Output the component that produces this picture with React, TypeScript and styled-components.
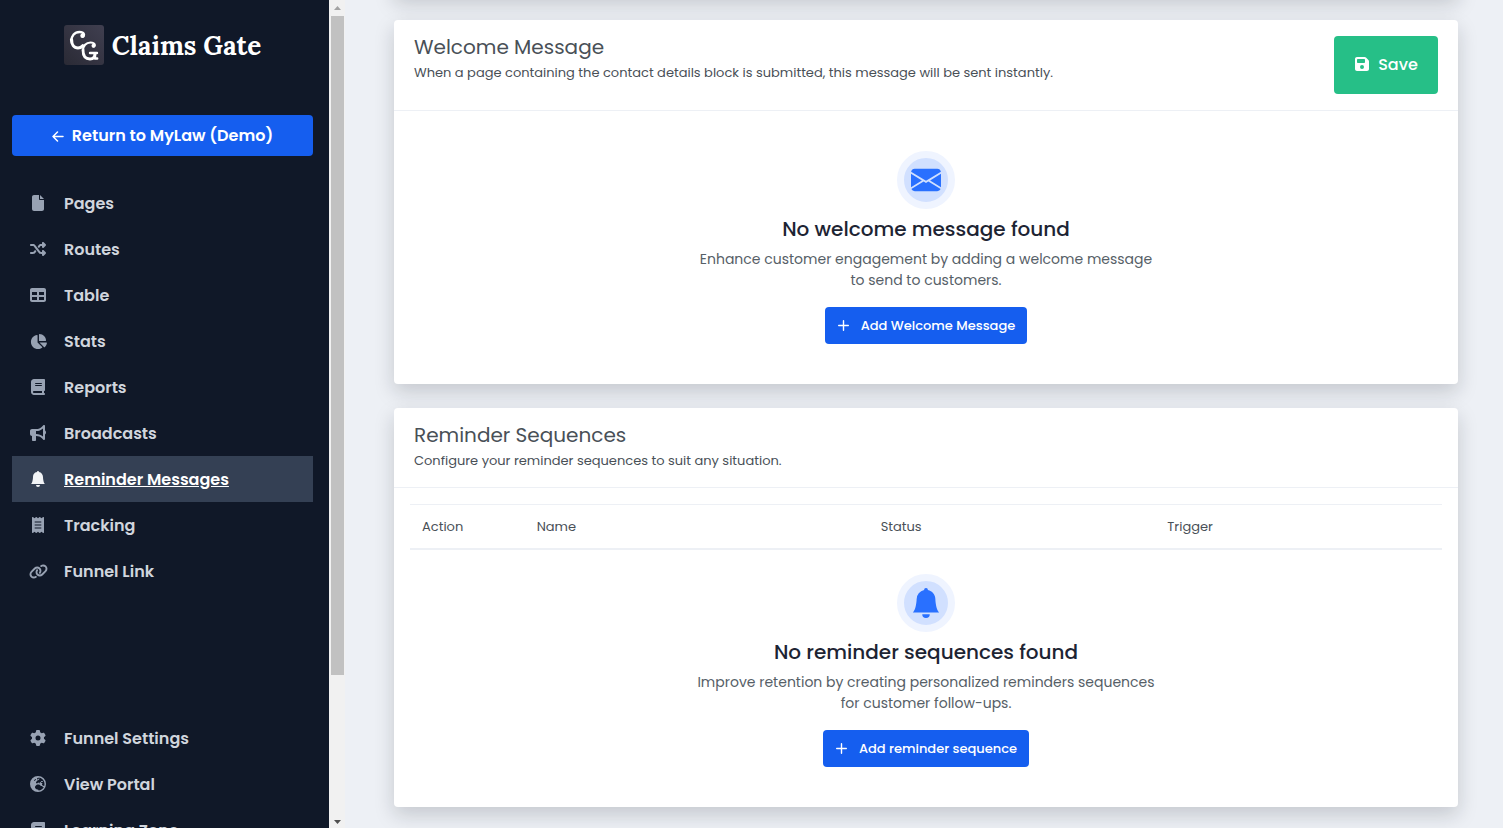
import React from 'react';
import styled, { createGlobalStyle } from 'styled-components';
import {
  FaFile, FaShuffle, FaTable, FaChartPie, FaBook, FaBullhorn, FaReceipt, FaLink, FaGear,
  FaEarthEurope, FaFloppyDisk,
} from 'react-icons/fa6';
import { BsBellFill, BsEnvelopeFill } from 'react-icons/bs';

const GlobalStyle = createGlobalStyle`
  *, *::before, *::after { box-sizing: border-box; }
  body {
    margin: 0;
    background: #edf0f5;
    color: #495057;
    font-family: Poppins, Inter, sans-serif;
    font-size: 14px;
  }
  h2, h3, p { margin: 0; }
  button { font-family: inherit; cursor: pointer; }
`;

const Page = styled.div`
  display: flex;
  height: 100vh;
  overflow: hidden;
`;

const Sidebar = styled.aside`
  flex: 0 0 329px;
  padding: 24px 16px 0 12px;
  background: #101828;
  overflow: hidden;
`;

const Brand = styled.a`
  display: flex;
  align-items: center;
  justify-content: center;
  gap: 8px;
  height: 42px;
  margin-bottom: 49px;
  color: #fff;
  font-family: Lora, "Liberation Serif", serif;
  font-size: 26px;
  font-weight: 700;
  text-decoration: none;
`;

const ReturnLink = styled.a`
  display: flex;
  align-items: center;
  justify-content: center;
  gap: 8px;
  height: 41px;
  margin-bottom: 24px;
  border-radius: 4px;
  background: #155eef;
  color: #fff;
  font-size: 16px;
  font-weight: 600;
  text-decoration: none;
`;

const NavList = styled.nav<{ $spaced?: boolean }>`
  display: flex;
  flex-direction: column;
  margin-top: ${(p) => (p.$spaced ? '121px' : '0')};
`;

const NavLink = styled.a<{ $active?: boolean }>`
  display: flex;
  align-items: center;
  gap: 16px;
  height: 46px;
  padding: 0 16px;
  background: ${(p) => (p.$active ? '#344054' : 'transparent')};
  color: ${(p) => (p.$active ? '#fff' : '#d0d5dd')};
  font-size: 16px;
  font-weight: 600;
  text-decoration: ${(p) => (p.$active ? 'underline' : 'none')};
`;

const NavIcon = styled.span<{ $active?: boolean }>`
  display: flex;
  justify-content: center;
  width: 20px;
  color: ${(p) => (p.$active ? '#f2f4f7' : '#98a2b3')};
  font-size: 16px;
`;

const ScrollTrack = styled.div`
  display: flex;
  flex: 0 0 16px;
  flex-direction: column;
  align-items: center;
  background: #f1f1f1;
`;

const ScrollArrow = styled.svg`
  flex: none;
  width: 16px;
  height: 16px;
`;

const ScrollThumb = styled.div`
  flex: 24;
  width: 13px;
  background: #c1c1c1;
`;

const ScrollGap = styled.div`
  flex: 5;
`;

const Main = styled.main`
  flex: 1;
  min-width: 0;
  padding: 0 45px 0 49px;
  overflow: hidden;
`;

const Card = styled.section`
  margin-bottom: 24px;
  border-radius: 4px;
  background: #fff;
  box-shadow: 0 8px 20px rgba(18, 22, 33, 0.18);
`;

const CardAbove = styled(Card)`
  height: 48px;
  margin-top: -52px;
`;

const CardHeader = styled.header`
  display: flex;
  align-items: flex-start;
  justify-content: space-between;
  padding: 16px 20px;
  border-bottom: 1px solid #edf0f5;
`;

const CardTitle = styled.h2`
  color: #495057;
  font-size: 20px;
  font-weight: 400;
  line-height: 22px;
`;

const CardText = styled.p`
  padding-top: 5px;
  font-size: 13px;
  line-height: 20px;
`;

const SaveButton = styled.button`
  display: flex;
  align-items: center;
  justify-content: center;
  gap: 8px;
  width: 104px;
  height: 58px;
  padding: 0 0 2px;
  border: 0;
  border-radius: 4px;
  background: #26bf87;
  color: #fff;
  font-size: 16px;
  font-weight: 500;
`;

const Empty = styled.div<{ $top: number }>`
  display: flex;
  flex-direction: column;
  align-items: center;
  padding: ${(p) => p.$top}px 20px 40px;
  text-align: center;
`;

const Badge = styled.span`
  display: flex;
  align-items: center;
  justify-content: center;
  width: 58px;
  height: 58px;
  border: 7px solid #eff4ff;
  border-radius: 50%;
  background: #d1e0ff;
  color: #2970ff;
  font-size: 30px;
`;

const EmptyTitle = styled.h3`
  margin-top: 8px;
  color: #1d2433;
  font-size: 20px;
  font-weight: 500;
  line-height: 24px;
`;

const EmptyText = styled.p`
  max-width: 460px;
  margin: 8px 0 16px;
  color: #566067;
  font-size: 14px;
  line-height: 21px;
`;

const AddButton = styled.button`
  display: flex;
  align-items: center;
  gap: 12px;
  height: 37px;
  padding: 0 12px;
  border: 0;
  border-radius: 4px;
  background: #155eef;
  color: #fff;
  font-size: 13px;
  font-weight: 500;
`;

const TableWrap = styled.div`
  padding: 16px 16px 0;
`;

const Table = styled.table`
  width: 100%;
  border-collapse: separate;
  border-spacing: 0;
  table-layout: fixed;
`;

const HeadCell = styled.th<{ $share: number }>`
  width: calc(100% * ${(p) => p.$share} / 18);
  height: 46px;
  padding: 0 12px;
  border-top: 1px solid #edf0f5;
  border-bottom: 2px solid #edf0f5;
  font-size: 13px;
  font-weight: 400;
  text-align: left;
`;

const BrandMark = () => (
  <svg width="40" height="40" viewBox="0 0 40 40" aria-hidden="true">
    <defs>
      <linearGradient id="mark" x1="1" y1="0" x2="0" y2="1">
        <stop offset="0" stopColor="#403f50" />
        <stop offset="1" stopColor="#2a2a35" />
      </linearGradient>
    </defs>
    <rect width="40" height="40" rx="3" fill="url(#mark)" />
    <g fill="none" stroke="#fff" strokeLinecap="round" strokeLinejoin="round">
      <path d="M18.500 11.500c2.500-.5 2-4.500-3-4.500C10.500 7 7.500 11 7.500 15.500" strokeWidth="2.400" />
      <path d="M7.500 14.500c0 5 2.500 8.500 6.500 8.500 2 0 3.500-.7 4.800-2.200" strokeWidth="3.200" />
      <path d="M29.500 21.500c2-.5 2-4-3-4-4.500 0-7.500 3.500-7.500 8" strokeWidth="2.200" />
      <path d="M19 25c0 5.500 2.500 9 7 9 3 0 5-1.500 5-5.500" strokeWidth="2.800" />
      <path d="M26 28h7M31 28v5.500h2.200" strokeWidth="2.400" />
    </g>
    <circle cx="18.500" cy="10.800" r="2.200" fill="#fff" />
    <circle cx="29.500" cy="20.800" r="2" fill="#fff" />
  </svg>
);

const ArrowLeft = () => (
  <svg width="12" height="12" viewBox="0 0 12 12" fill="none" stroke="currentColor" strokeWidth="1.500" strokeLinecap="round" strokeLinejoin="round" aria-hidden="true">
    <path d="M11 6.500H1M5.500 2L1 6.500 5.500 11" />
  </svg>
);

const Plus = () => (
  <svg width="12" height="12" viewBox="0 0 12 12" fill="none" stroke="currentColor" strokeWidth="1.400" strokeLinecap="round" aria-hidden="true">
    <path d="M6.500 .700v9.600M1.700 5.500h9.600" />
  </svg>
);

type Item = { label: string; icon: React.ReactNode; active?: boolean };

const primaryLinks: Item[] = [
  { label: 'Pages', icon: <FaFile /> },
  { label: 'Routes', icon: <FaShuffle /> },
  { label: 'Table', icon: <FaTable /> },
  { label: 'Stats', icon: <FaChartPie size={17} /> },
  { label: 'Reports', icon: <FaBook /> },
  { label: 'Broadcasts', icon: <FaBullhorn /> },
  { label: 'Reminder Messages', icon: <BsBellFill />, active: true },
  { label: 'Tracking', icon: <FaReceipt /> },
  { label: 'Funnel Link', icon: <FaLink size={19} /> },
];

const secondaryLinks: Item[] = [
  { label: 'Funnel Settings', icon: <FaGear /> },
  { label: 'View Portal', icon: <FaEarthEurope /> },
  { label: 'Learning Zone', icon: <FaBook /> },
];

const columns = [
  { label: 'Action', share: 2 },
  { label: 'Name', share: 6 },
  { label: 'Status', share: 5 },
  { label: 'Trigger', share: 5 },
];

const renderLink = (item: Item) => (
  <NavLink key={item.label} href="#" $active={item.active}>
    <NavIcon $active={item.active}>{item.icon}</NavIcon>
    {item.label}
  </NavLink>
);

export default function App() {
  return (
    <Page>
      <GlobalStyle />
      <Sidebar>
        <Brand href="#"><BrandMark />Claims Gate</Brand>
        <ReturnLink href="#"><ArrowLeft />Return to MyLaw (Demo)</ReturnLink>
        <NavList>{primaryLinks.map(renderLink)}</NavList>
        <NavList $spaced>{secondaryLinks.map(renderLink)}</NavList>
      </Sidebar>
      <ScrollTrack aria-hidden="true">
        <ScrollArrow viewBox="0 0 16 16"><path d="M5 10h7L8.500 6z" fill="#a3a3a3" /></ScrollArrow>
        <ScrollThumb />
        <ScrollGap />
        <ScrollArrow viewBox="0 0 16 16"><path d="M5 8h7l-3.500 4z" fill="#505050" /></ScrollArrow>
      </ScrollTrack>
      <Main>
        <CardAbove />
        <Card>
          <CardHeader>
            <div>
              <CardTitle>Welcome Message</CardTitle>
              <CardText>When a page containing the contact details block is submitted, this message will be sent instantly.</CardText>
            </div>
            <SaveButton type="button"><FaFloppyDisk />Save</SaveButton>
          </CardHeader>
          <Empty $top={40}>
            <Badge><BsEnvelopeFill /></Badge>
            <EmptyTitle>No welcome message found</EmptyTitle>
            <EmptyText>Enhance customer engagement by adding a welcome message to send to customers.</EmptyText>
            <AddButton type="button"><Plus />Add Welcome Message</AddButton>
          </Empty>
        </Card>
        <Card>
          <CardHeader>
            <div>
              <CardTitle>Reminder Sequences</CardTitle>
              <CardText>Configure your reminder sequences to suit any situation.</CardText>
            </div>
          </CardHeader>
          <TableWrap>
            <Table>
              <thead>
                <tr>{columns.map((c) => <HeadCell key={c.label} scope="col" $share={c.share}>{c.label}</HeadCell>)}</tr>
              </thead>
            </Table>
          </TableWrap>
          <Empty $top={24}>
            <Badge><BsBellFill /></Badge>
            <EmptyTitle>No reminder sequences found</EmptyTitle>
            <EmptyText>Improve retention by creating personalized reminders sequences for customer follow-ups.</EmptyText>
            <AddButton type="button"><Plus />Add reminder sequence</AddButton>
          </Empty>
        </Card>
      </Main>
    </Page>
  );
}
